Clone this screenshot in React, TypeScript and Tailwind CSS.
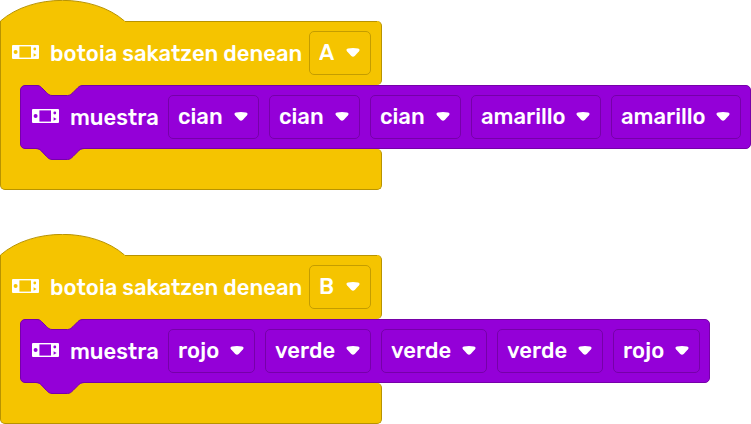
type Field = { id: string; value: string; width: string };

type Stack = { trigger: Field; statement: Field[] };

const stacks: Stack[] = [
  {
    trigger: { id: "button-a", value: "A", width: "w-[62px]" },
    statement: [
      { id: "first-1", value: "cian", width: "w-[91px]" },
      { id: "first-2", value: "cian", width: "w-[91px]" },
      { id: "first-3", value: "cian", width: "w-[91px]" },
      { id: "first-4", value: "amarillo", width: "w-[130px]" },
      { id: "first-5", value: "amarillo", width: "w-[130px]" },
    ],
  },
  {
    trigger: { id: "button-b", value: "B", width: "w-[62px]" },
    statement: [
      { id: "second-1", value: "rojo", width: "w-[87px]" },
      { id: "second-2", value: "verde", width: "w-[106px]" },
      { id: "second-3", value: "verde", width: "w-[106px]" },
      { id: "second-4", value: "verde", width: "w-[106px]" },
      { id: "second-5", value: "rojo", width: "w-[87px]" },
    ],
  },
];

const buttons = ["A", "B"];
const colours = ["rojo", "verde", "cian", "amarillo"];

function DeviceIcon() {
  return (
    <svg className="mb-[2px] h-[14px] w-[27px] shrink-0" viewBox="0 0 27 14" aria-hidden="true">
      <path
        fill="white"
        d="M1 0H26Q27 0 27 1V13Q27 14 26 14H1Q0 14 0 13V1Q0 0 1 0Z"
      />
      <path fill="currentColor" d="M7.4 1.4H19V12.6H7.4Z" />
      <circle cx="3.6" cy="7" r="2" fill="currentColor" />
      <circle cx="22.8" cy="4" r="1.4" fill="currentColor" />
      <path fill="currentColor" d="M21.6 8.2L24.6 10L21.6 11.8Z" />
    </svg>
  );
}

function FieldSelect({ field, options, label, tone }: { field: Field; options: string[]; label: string; tone: string }) {
  return (
    <div className={`relative shrink-0 ${field.width}`}>
      <select
        id={field.id}
        aria-label={label}
        defaultValue={field.value}
        className={`block h-11 w-full appearance-none rounded-[5px] border bg-transparent pl-[9px] text-white outline-none ${tone}`}
      >
        {options.map((option) => (
          <option key={option}>{option}</option>
        ))}
      </select>
      <svg
        className="pointer-events-none absolute top-[17px] right-[11px] h-[9px] w-[14px]"
        viewBox="0 0 14 9"
        aria-hidden="true"
      >
        <path
          fill="white"
          d="M2 0.5Q7 -0.3 12 0.5Q14.5 1.2 13 3.2L8.7 8Q7 9.6 5.3 8L1 3.2Q-0.5 1.2 2 0.5Z"
        />
      </svg>
    </div>
  );
}

function EventStack({ stack }: { stack: Stack }) {
  return (
    <section className="w-[382px]">
      <svg className="block h-[21px] w-[125px]" viewBox="0 0 125 21" aria-hidden="true">
        <path fill="#f5c400" d="M0.5 21C32 -6.5 93 -6.5 124.5 21Z" />
        <path fill="none" stroke="#b89300" d="M0.5 21C32 -6.5 93 -6.5 124.5 21" />
      </svg>
      <div className="relative flex h-16 items-center rounded-r-[5px] border-x border-[#b89300] bg-[#f5c400] pl-[11px] text-[#f5c400]">
        <span className="absolute top-0 right-1 left-[124px] h-px bg-[#b89300]" />
        <DeviceIcon />
        <span className="ml-[11px] w-[259px] shrink-0 pt-[2px] whitespace-nowrap text-white">botoia sakatzen denean</span>
        <FieldSelect field={stack.trigger} options={buttons} label="botoia" tone="border-[#c49d00]" />
      </div>
      <div className="border-l border-[#b89300] bg-[#f5c400] pl-[19px]">
        <div className="relative flex h-16 w-max items-center rounded-[5px] border border-[#7600a9] bg-[#9400d8] pr-[9px] pl-[11px] text-[#9400d8]">
          <svg
            className="absolute -top-px left-[15px] h-[11px] w-[48px]"
            viewBox="0 0 48 11"
            aria-hidden="true"
          >
            <path fill="#f5c400" d="M0 0C3 0 4 1 5.5 2.5L10.5 7.5C12 9 13.5 10.5 16 10.5H31.5C34 10.5 35.5 9 37 7.5L42 2.5C43.5 1 45 0 48 0Z" />
            <path fill="none" stroke="#7600a9" d="M0 0.5C3 0.5 4 1 5.5 2.5L10.5 7.5C12 9 13.5 10.5 16 10.5H31.5C34 10.5 35.5 9 37 7.5L42 2.5C43.5 1 45 0.5 48 0.5" />
          </svg>
          <DeviceIcon />
          <span className="mx-[11px] w-[87px] shrink-0 pt-[2px] whitespace-nowrap text-white">muestra</span>
          <div className="flex gap-[10px]">
            {stack.statement.map((field, index) => (
              <FieldSelect
                key={field.id}
                field={field}
                options={colours}
                label={`muestra ${index + 1}`}
                tone="border-[#7600a9]"
              />
            ))}
          </div>
          <svg
            className="absolute top-[62px] left-[15px] h-[12px] w-[48px]"
            viewBox="0 0 48 12"
            aria-hidden="true"
          >
            <path fill="#9400d8" d="M0 0H48V1C45 1 43.5 2 42 3.5L37 8.5C35.5 10 34 11.5 31.5 11.5H16C13.5 11.5 12 10 10.5 8.5L5.5 3.5C4 2 3 1 0 1Z" />
            <path fill="none" stroke="#7600a9" d="M0 0.5C3 0.5 4 1.5 5.5 3L10.5 8.5C12 10 13.5 11.5 16 11.5H31.5C34 11.5 35.5 10 37 8.5L42 3.5C43.5 1.5 45 0.5 48 0.5" />
          </svg>
        </div>
      </div>
      <div className="h-[41px] rounded-r-[5px] rounded-bl-[5px] border-x border-b border-[#b89300] bg-[#f5c400]" />
    </section>
  );
}

export default function App() {
  return (
    <main className="flex min-h-screen flex-col gap-11 overflow-hidden bg-white font-[Rubik,Roboto,sans-serif] text-[22px] leading-7 font-medium">
      {stacks.map((stack) => (
        <EventStack key={stack.trigger.id} stack={stack} />
      ))}
    </main>
  );
}
